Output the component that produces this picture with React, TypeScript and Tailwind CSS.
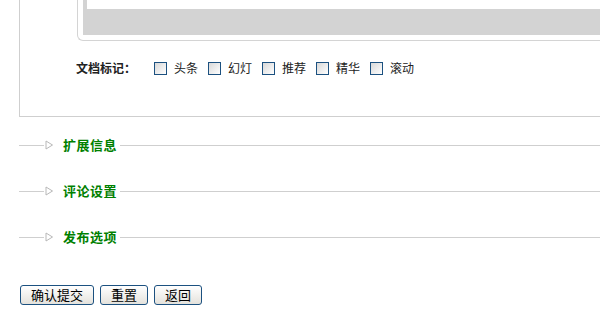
import React from "react";

const font = { fontFamily: '"Noto Sans CJK SC", "Liberation Sans", sans-serif' };

function Check({ label }: { label: string }) {
  return (
    <label className="flex items-center mr-[10px]">
      <span className="w-[13px] h-[13px] border border-[#1c5180] bg-gradient-to-br from-[#d8d8d8] to-white box-border" />
      <span className="ml-[7px] text-[12px] leading-[14px] text-[#222]">{label}</span>
    </label>
  );
}

function Section({ title }: { title: string }) {
  return (
    <div className="flex items-center h-[46px] ml-[19px]">
      <div className="w-[25px] h-px bg-[#cfcfcf]" />
      <svg width="9" height="10" viewBox="0 0 9 10" className="ml-[1px]">
        <path d="M1 1 L7.5 5 L1 9 Z" fill="white" stroke="#b8b8b8" strokeWidth="1" />
      </svg>
      <span className="ml-[9px] text-[13px] tracking-[0.5px] font-bold text-[#008000] leading-[14px]">{title}</span>
      <div className="flex-1 h-px bg-[#cfcfcf] ml-[3px]" />
    </div>
  );
}

export default function App() {
  return (
    <div className="w-[600px] h-[320px] overflow-hidden bg-white relative" style={font}>
      <div className="ml-[19px] border-l border-b border-[#cfcfcf] h-[117px] box-border">
        <div className="ml-[57px] h-[41px] border-l border-b border-[#d4d4d4] rounded-bl-[6px] pl-[5px] pb-[5px] box-border">
          <div className="h-full bg-[#d3d3d3] pl-[4px] pb-[26px] box-border">
            <div className="h-full bg-white" />
          </div>
        </div>
        <div className="flex items-center mt-[20px] ml-[56px]">
          <span className="text-[12px] font-bold text-[#222] leading-[14px] w-[78px]">文档标记：</span>
          <Check label="头条" />
          <Check label="幻灯" />
          <Check label="推荐" />
          <Check label="精华" />
          <Check label="滚动" />
        </div>
      </div>
      <div className="mt-[5px]">
        <Section title="扩展信息" />
        <Section title="评论设置" />
        <Section title="发布选项" />
      </div>
      <div className="flex ml-[20px] mt-[25px] gap-[6px]">
        <button className="h-[20px] w-[74px] border border-[#1c5180] rounded-[3px] bg-gradient-to-b from-white to-[#e4e2dc] text-[13px] leading-[16px] text-black">确认提交</button>
        <button className="h-[20px] w-[48px] border border-[#1c5180] rounded-[3px] bg-gradient-to-b from-white to-[#e4e2dc] text-[13px] leading-[16px] text-black">重置</button>
        <button className="h-[20px] w-[48px] border border-[#1c5180] rounded-[3px] bg-gradient-to-b from-white to-[#e4e2dc] text-[13px] leading-[16px] text-black">返回</button>
      </div>
    </div>
  );
}
